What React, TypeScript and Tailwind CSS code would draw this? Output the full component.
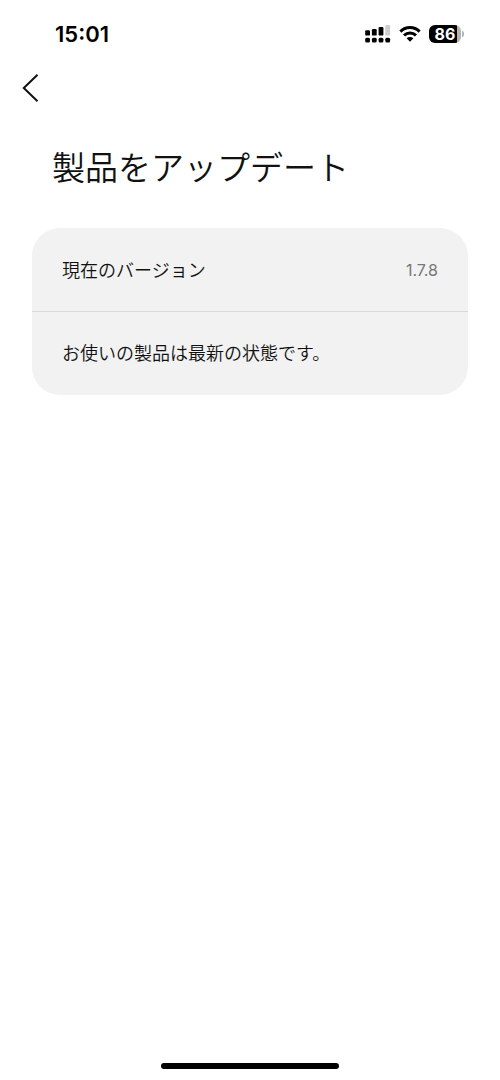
function SignalIcon() {
  return (
    <svg width="26" height="18" viewBox="0 0 26 18" role="img" aria-label="電波強度">
      <rect x="0.2" y="5.2" width="4.8" height="5.4" rx="1.2" />
      <rect x="6.9" y="4" width="4.8" height="6.6" rx="1.2" />
      <rect x="13.6" y="2" width="4.8" height="8.6" rx="1.2" />
      <rect x="20.3" y="0" width="4.8" height="10.6" rx="1.2" fill="#cfcfcf" />
      <rect x="0.2" y="12.8" width="4.8" height="4.6" rx="1.5" />
      <rect x="6.9" y="12.8" width="4.8" height="4.6" rx="1.5" />
      <rect x="13.6" y="12.8" width="4.8" height="4.6" rx="1.5" />
      <rect x="20.3" y="12.8" width="4.8" height="4.6" rx="1.5" />
    </svg>
  );
}

function WifiIcon() {
  return (
    <svg width="22" height="16" viewBox="0 0 22 16" fill="none" stroke="#000" strokeWidth="3" role="img" aria-label="Wi-Fi">
      <path d="M1.4 5.6C6.8 0.2 15.2 0.2 20.6 5.6" />
      <path d="M5 9.4C8.5 6.1 13.5 6.1 17 9.4" />
      <path d="M11 15.8L7.6 12.3C9.6 10.6 12.4 10.6 14.4 12.3Z" fill="#000" stroke="none" />
    </svg>
  );
}

function Battery() {
  return (
    <div className="flex items-center gap-px">
      <div className="flex h-[18px] w-8 items-center justify-center rounded-md bg-linear-to-r from-black from-86% to-[#b5b5b5] to-86% text-base leading-none font-bold text-white">
        86
      </div>
      <div className="h-1.5 w-0.5 rounded-r-full bg-[#b5b5b5]" />
    </div>
  );
}

export default function App() {
  return (
    <div className="flex min-h-screen flex-col bg-white font-['Noto_Sans_CJK_JP',sans-serif] text-[#111]">
      <header className="flex h-16 items-center justify-between pr-9 pl-[55px] pt-1 font-['Inter',sans-serif] text-black">
        <time className="text-[22px] leading-6 font-semibold">15:01</time>
        <div className="flex items-center gap-2">
          <SignalIcon />
          <WifiIcon />
          <Battery />
        </div>
      </header>

      <nav className="px-[15px]">
        <button type="button" aria-label="戻る" className="flex h-12 w-8 items-center justify-center">
          <svg width="18" height="30" viewBox="0 0 18 30" fill="none" stroke="#111" strokeWidth="2">
            <path d="M15.5 1.8L1.8 15L15.5 28.2" />
          </svg>
        </button>
      </nav>

      <main className="grow px-8 pt-8">
        <h1 className="px-5 text-[33px] leading-[44px] font-[350]">製品をアップデート</h1>
        <dl className="mt-10 rounded-[28px] bg-[#f2f2f2] text-lg">
          <div className="flex h-[84px] items-center justify-between border-b border-[#d9d9d9] px-[30px]">
            <dt className="pb-0.5 font-[350]">現在のバージョン</dt>
            <dd className="font-['Inter',sans-serif] text-base text-[#777]">1.7.8</dd>
          </div>
          <div className="flex h-[83px] items-center px-[30px]">
            <dd className="pb-1 font-[350]">お使いの製品は最新の状態です。</dd>
          </div>
        </dl>
      </main>

      <footer className="flex justify-center pb-[11px]">
        <div className="h-1.5 w-[178px] rounded-full bg-black" />
      </footer>
    </div>
  );
}
